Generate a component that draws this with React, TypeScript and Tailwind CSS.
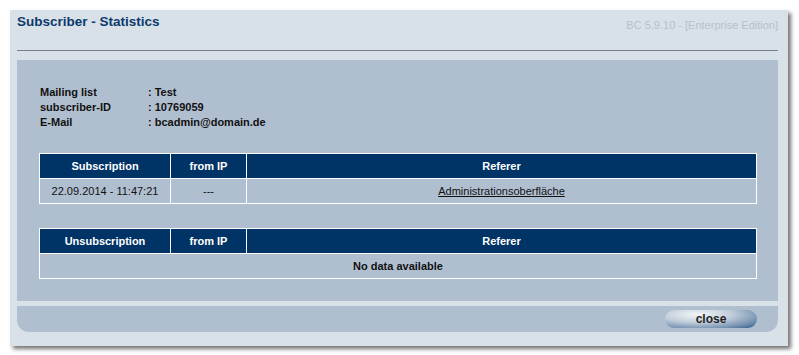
import React from 'react';

const font = { fontFamily: '"Liberation Sans", Arial, sans-serif' };

function StatsTable({ title, rows }: { title: string; rows: string[][] | null }) {
  return (
    <table className="w-[718px] border-collapse border border-white text-[11px] table-fixed">
      <colgroup>
        <col className="w-[131px]" />
        <col className="w-[76px]" />
        <col />
      </colgroup>
      <thead>
        <tr className="h-[25px] bg-[#003366] text-white font-bold">
          <th className="border border-white font-bold">{title}</th>
          <th className="border border-white font-bold">from IP</th>
          <th className="border border-white font-bold">Referer</th>
        </tr>
      </thead>
      <tbody>
        {rows ? (
          rows.map((r, i) => (
            <tr key={i} className="h-[25px] text-[#111]">
              <td className="border border-white text-center">{r[0]}</td>
              <td className="border border-white text-center">{r[1]}</td>
              <td className="border border-white text-center">
                <a className="underline text-[#111]">{r[2]}</a>
              </td>
            </tr>
          ))
        ) : (
          <tr className="h-[25px]">
            <td colSpan={3} className="border border-white text-center font-bold text-[#111]">
              No data available
            </td>
          </tr>
        )}
      </tbody>
    </table>
  );
}

export default function App() {
  return (
    <div className="w-[799px] h-[355px] bg-white p-[10px]" style={font}>
      <div className="w-[778px] h-[336px] bg-[#d8e0e8] pl-[7px] pr-[10px] shadow-[3px_3px_4px_rgba(0,0,0,0.55)] flex flex-col">
        {/* header */}
        <div className="h-[41px] border-b border-[#7b8087] flex justify-between items-start pt-[4px]">
          <h1 className="text-[13.5px] font-bold text-[#0b3a6c] leading-[16px]">Subscriber - Statistics</h1>
          <span className="text-[11px] text-[#b6c1cc] leading-[16px] pt-[3px]">BC 5.9.10 - [Enterprise Edition]</span>
        </div>

        {/* content */}
        <div className="mt-[9px] h-[241px] bg-[#b0bfd0] pt-[25px] pl-[22px]">
          <div className="grid grid-cols-[108px_auto] text-[11px] font-bold leading-[15px] text-[#111] pl-px">
            <span>Mailing list</span>
            <span>: Test</span>
            <span>subscriber-ID</span>
            <span>: 10769059</span>
            <span>E-Mail</span>
            <span>: bcadmin@domain.de</span>
          </div>
          <div className="mt-[23px]">
            <StatsTable title="Subscription" rows={[["22.09.2014 - 11:47:21", "---", "Administrationsoberfläche"]]} />
          </div>
          <div className="mt-[24px]">
            <StatsTable title="Unsubscription" rows={null} />
          </div>
        </div>

        {/* footer */}
        <div className="mt-[5px] h-[26px] bg-[#b0bfd0] rounded-b-[12px] flex justify-end items-start pt-[4px] pr-[21px]">
          <button className="w-[92px] h-[18px] rounded-full bg-[radial-gradient(ellipse_at_35%_25%,#f2f5f8_0%,#c3cfdb_40%,#7592b1_75%,#2f5a88_100%)] text-[12px] font-bold text-[#222] leading-[18px]">
            close
          </button>
        </div>
      </div>
    </div>
  );
}
